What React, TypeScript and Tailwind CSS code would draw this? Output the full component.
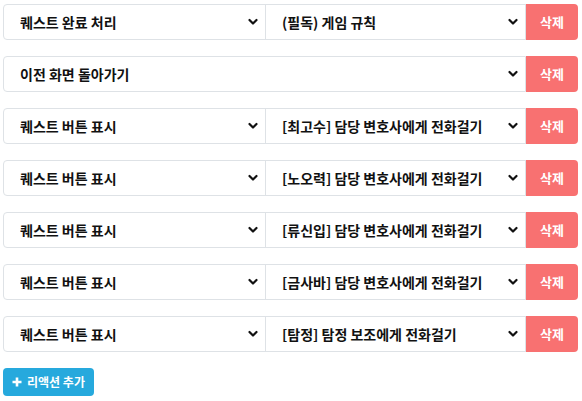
import React from 'react';

type Row = { left: string; right?: string };

const rows: Row[] = [
  { left: '퀘스트 완료 처리', right: '(필독) 게임 규칙' },
  { left: '이전 화면 돌아가기' },
  { left: '퀘스트 버튼 표시', right: '[최고수] 담당 변호사에게 전화걸기' },
  { left: '퀘스트 버튼 표시', right: '[노오력] 담당 변호사에게 전화걸기' },
  { left: '퀘스트 버튼 표시', right: '[류신입] 담당 변호사에게 전화걸기' },
  { left: '퀘스트 버튼 표시', right: '[금사바] 담당 변호사에게 전화걸기' },
  { left: '퀘스트 버튼 표시', right: '[탐정] 탐정 보조에게 전화걸기' },
];

const Chevron: React.FC = () => (
  <svg width="10" height="8" viewBox="0 0 10 8" className="shrink-0">
    <path d="M1.5 2 L5 5.5 L8.5 2" fill="none" stroke="#111" strokeWidth="2.2" strokeLinecap="round" strokeLinejoin="round" />
  </svg>
);

const Select: React.FC<{ label: string; className: string }> = ({ label, className }) => (
  <div className={`flex items-center h-[36px] border border-[#dee2e6] bg-white pl-4 pr-[7px] ${className}`}>
    <span className="flex-1 truncate">{label}</span>
    <Chevron />
  </div>
);

const App: React.FC = () => {
  return (
    <div
      className="px-[3px] pt-[4px] pr-[4px] text-[14px] font-bold text-[#111] bg-white"
      style={{ fontFamily: '"Noto Sans CJK KR", "Noto Sans", sans-serif' }}
    >
      <div className="flex flex-col gap-4">
        {rows.map((row, i) => (
          <div key={i} className="flex">
            {row.right ? (
              <>
                <Select label={row.left} className="w-[263px] rounded-l" />
                <Select label={row.right} className="flex-1 -ml-px pr-[7px]" />
              </>
            ) : (
              <Select label={row.left} className="flex-1 rounded-l" />
            )}
            <button className="w-[52px] h-[36px] bg-[#f87171] text-white rounded-r text-[13px] font-bold">
              삭제
            </button>
          </div>
        ))}
      </div>
      <button className="mt-4 h-[28px] px-[9px] flex items-center gap-[5px] rounded bg-[#26a9dd] text-white text-[12px] font-bold">
        <svg width="10" height="10" viewBox="0 0 10 10">
          <path d="M5 0.5 V9.5 M0.5 5 H9.5" stroke="white" strokeWidth="2.6" />
        </svg>
        리액션 추가
      </button>
    </div>
  );
};

export default App;
